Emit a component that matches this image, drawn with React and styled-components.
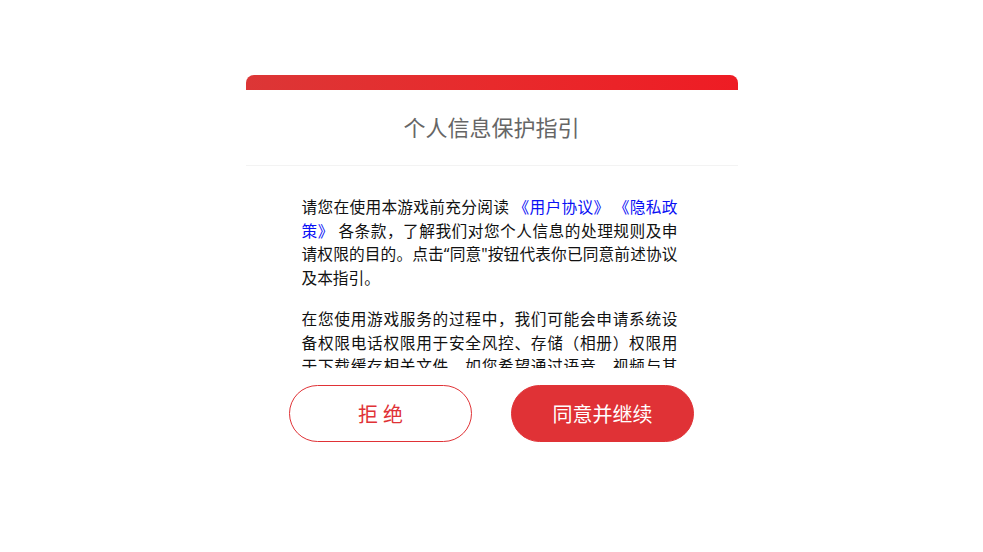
import React from "react";
import styled, { createGlobalStyle } from "styled-components";

const GlobalStyle = createGlobalStyle`
    html, body {
        margin: 0;
        padding: 0;
        background: #ffffff;
    }

    body {
        font-family: "Noto Sans", "Noto Sans CJK SC", sans-serif;
    }
`;

export default function App() {
    return (
        <Page>
            <GlobalStyle />
            <Card>
                <TopBar />
                <Title>个人信息保护指引</Title>
                <Divider />
                <ScrollBox>
                    <Paragraph>
                        请您在使用本游戏前充分阅读 <Link>《用户协议》</Link> <Link>《隐私政策》</Link> 各条款，了解我们对您个人信息的处理规则及申请权限的目的。点击“同意"按钮代表你已同意前述协议及本指引。
                    </Paragraph>
                    <Paragraph>
                        在您使用游戏服务的过程中，我们可能会申请系统设备权限电话权限用于安全风控、存储（相册）权限用于下载缓存相关文件，如您希望通过语音、视频与其他玩家互动，我们将申请麦克风、摄像头权限。
                    </Paragraph>
                </ScrollBox>
                <Actions>
                    <Button>拒 绝</Button>
                    <Button $primary>同意并继续</Button>
                </Actions>
            </Card>
        </Page>
    );
}

const Page = styled.div`
    width: 100%;
    min-height: 552px;
    display: flex;
    justify-content: center;
    padding-top: 75px;
    box-sizing: border-box;
`;

const Card = styled.div`
    width: 492px;
    display: flex;
    flex-direction: column;
    background: #ffffff;
`;

const TopBar = styled.div`
    height: 15px;
    border-radius: 8px 8px 0 0;
    background: linear-gradient(90deg, #dc3636 0%, #e82a2c 50%, #ee1c24 100%);
`;

const Title = styled.div`
    height: 75px;
    display: flex;
    align-items: center;
    justify-content: center;
    font-size: 22px;
    color: #666666;
    padding-bottom: 3px;
    box-sizing: border-box;
`;

const Divider = styled.div`
    height: 1px;
    background: #f3f3f3;
`;

const ScrollBox = styled.div`
    margin-top: 30px;
    height: 172px;
    overflow: hidden;
    padding: 0 60px 0 56px;
`;

const Paragraph = styled.p`
    margin: 0 0 18px 0;
    font-size: 15.7px;
    line-height: 23.5px;
    color: #111111;
    text-align: justify;
`;

const Link = styled.span`
    color: #0a10f5;
`;

const Actions = styled.div`
    display: flex;
    justify-content: center;
    gap: 39px;
    margin-top: 17px;
`;

const Button = styled.div`
    width: 183px;
    height: 57px;
    box-sizing: border-box;
    border-radius: 29px;
    display: flex;
    align-items: center;
    justify-content: center;
    font-size: 20px;
    border: 1.5px solid #e03236;
    color: ${p => (p.$primary ? "#ffffff" : "#e03236")};
    background: ${p => (p.$primary ? "#e03236" : "#ffffff")};
`;
